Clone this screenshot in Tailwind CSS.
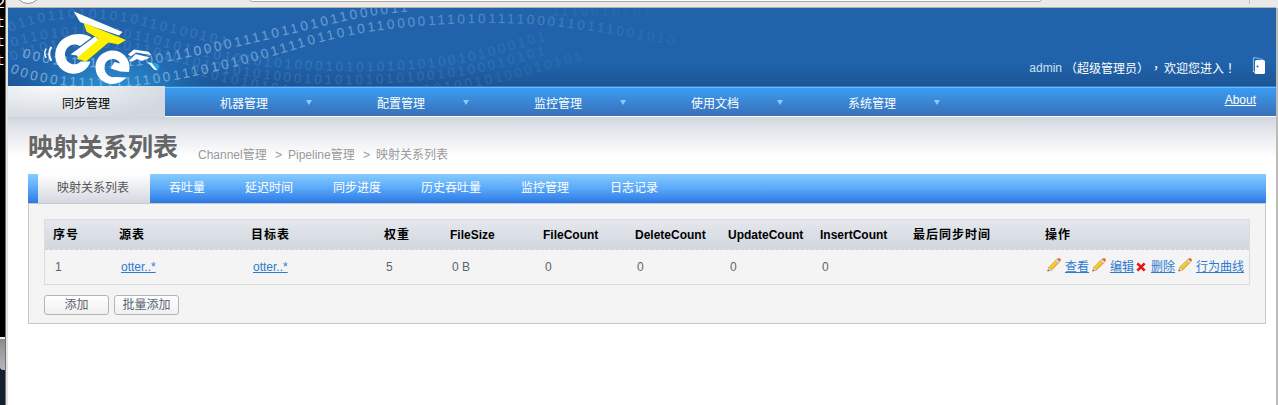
<!DOCTYPE html>
<html lang="zh">
<head>
<meta charset="utf-8">
<title>映射关系列表</title>
<script src="https://cdn.jsdelivr.net/npm/@tailwindcss/browser@4"></script>
</head>
<body class="w-[1278px] h-[405px] overflow-hidden bg-white flex font-['Liberation_Sans','Noto_Sans_CJK_SC',sans-serif] text-[12px] leading-[16px] text-[#5a6470]">
<svg width="0" height="0" class="absolute">
  <defs>
    <linearGradient id="pb" x1="0" y1="0" x2="1" y2="1"><stop offset="0" stop-color="#fff3a8"/><stop offset=".5" stop-color="#fbc81c"/><stop offset="1" stop-color="#d08a10"/></linearGradient>
    <symbol id="pencil" viewBox="0 0 14 14">
      <path d="M1.8 9.2 8.8 2.2 11.6 5 4.6 12 .8 13Z" fill="url(#pb)" stroke="#b08a4c" stroke-width=".6"/>
      <path d="M1.8 9.2 4.6 12 .8 13Z" fill="#f3dec2" stroke="#b89a78" stroke-width=".4"/>
      <path d="M.5 13.3 1.1 11.6 2.2 12.8Z" fill="#555"/>
      <path d="M8.4 2.6 10 1 12.8 3.8 11.2 5.4Z" fill="#dfe1e4" stroke="#9a9ca1" stroke-width=".5"/>
      <path d="M9.900 1.100 Q10 .2 13 .3 Q14 .8 13.700 3 Q13.300 3.800 12.700 3.800Z" fill="#f4661b"/>
    </symbol>
  </defs>
</svg>

<!-- strip of the desktop left of the window -->
<aside class="w-[8px] h-full shrink-0 flex">
  <div class="w-[5px] h-full flex flex-col bg-black overflow-hidden">
    <div class="h-[337px] text-white font-['Liberation_Mono',monospace] text-[15px] leading-[19px] -ml-[4px] -mt-[5px] mb-[5px]"><div>2</div><div>t</div><div>t</div><div>t</div></div>
    <div class="h-[2px] shrink-0 bg-[#f0f0f0]"></div>
    <div class="h-[31px] shrink-0 rounded-bl-[3px] bg-linear-to-b from-[#8c8c8c] to-[#b4b8be]"></div>
    <div class="flex-1 bg-[#142030]"></div>
  </div>
  <div class="w-px bg-[#74726f]"></div>
  <div class="w-[2px] bg-[#e6e4e1]"></div>
</aside>

<div class="w-[1268px] h-full shrink-0 flex flex-col">
  <!-- browser toolbar -->
  <div class="h-[8px] shrink-0 bg-[#ebeae8] border-b border-[#b5b3af] flex overflow-hidden">
    <div class="w-[26px] h-[26px] ml-[7px] -mt-[22px] rounded-full border border-[#969492] bg-[#fafafa]"></div>
    <div class="w-[793px] h-[10px] ml-[208px] -mt-[8px] rounded-b-[3px] border border-[#aaa8a5] bg-white"></div>
    <div class="w-px h-[4px] ml-[207px] bg-[#c4c2bf]"></div>
  </div>

  <!-- banner -->
  <header class="h-[78px] shrink-0 relative bg-linear-to-b from-[#2063ab] from-70% to-[#1c5596]">
    <svg class="absolute inset-0" width="1268" height="78" viewBox="8 8 1268 78">
      <defs>
        <radialGradient id="glow" gradientUnits="userSpaceOnUse" cx="0" cy="0" r="1" gradientTransform="translate(112 94) scale(110 56)"><stop offset="0" stop-color="#2f9ade"/><stop offset=".5" stop-color="#2889cf" stop-opacity=".6"/><stop offset="1" stop-color="#2066ae" stop-opacity="0"/></radialGradient>
        <linearGradient id="fa" gradientUnits="userSpaceOnUse" x1="8" y1="0" x2="700" y2="0"><stop offset="0" stop-color="#b4d6f4" stop-opacity=".6"/><stop offset=".5" stop-color="#9cc0e6" stop-opacity=".6"/><stop offset=".78" stop-color="#9cc0e6" stop-opacity=".3"/><stop offset=".9" stop-color="#9cc0e6" stop-opacity=".12"/><stop offset="1" stop-color="#9cc0e6" stop-opacity=".04"/></linearGradient>
        <linearGradient id="fb" gradientUnits="userSpaceOnUse" x1="8" y1="0" x2="660" y2="0"><stop offset="0" stop-color="#9cc4ea" stop-opacity=".2"/><stop offset=".65" stop-color="#9cc4ea" stop-opacity=".17"/><stop offset="1" stop-color="#9cc4ea" stop-opacity=".03"/></linearGradient>
        <path id="s1" d="M10 72 C40 87 100 91 150 84 C200 77 250 63 310 45 C370 28 430 23 500 23 C560 24 620 34 740 58"/>
        <path id="s2" d="M22 57 C60 70 120 70 170 61 C230 49 290 34 340 22 C370 15 400 12 450 7"/>
        <path id="s3" d="M10 32 C50 14 100 16 140 25 C180 36 210 40 250 54"/>
        <path id="s4" d="M12 47 C60 32 110 33 150 43 C200 58 230 62 262 66 C330 74 420 74 480 59 C530 45 560 36 620 22"/>
        <path id="s5" d="M12 61 C60 42 110 45 150 55 C210 72 240 76 282 81 C340 88 430 84 490 70 C540 57 570 46 640 32"/>
        <path id="s6" d="M190 73 C250 90 300 98 340 100 C400 100 480 88 520 77 C570 63 610 52 660 43"/>
        <path id="s7" d="M552 16 C590 15 630 15 680 22"/>
      </defs>
      <rect x="8" y="8" width="300" height="78" fill="url(#glow)"/>
      <g font-family="Liberation Sans, sans-serif" font-size="13.5" letter-spacing="2.8">
        <g fill="url(#fa)">
          <text><textPath href="#s1">00000111111111100111010100011110110101100001110101111000110111001010</textPath></text>
          <text><textPath href="#s2">0001111111111001110000111101101011000011</textPath></text>
        </g>
        <g fill="url(#fb)">
          <text><textPath href="#s3">0110110101010110100101</textPath></text>
          <text><textPath href="#s4">01101010101011010101010101010001010101010100101000101</textPath></text>
          <text><textPath href="#s5">01101010101011010101010101000101010101010010100010101</textPath></text>
          <text><textPath href="#s6">010101010101010100010101010010100010101</textPath></text>
          <text><textPath href="#s7">1110010101</textPath></text>
        </g>
      </g>
      <!-- bicycle logo -->
      <g fill="#fff">
        <path d="M73.8 11.5 L122.5 32 L119 35.5 L84 23.5 L80 22Z"/>
        <path d="M91.5 37.5 C83 31.5 66 33 58.500 44 C51 56 57 71 71 73.500 C80 75 88 69.500 90.500 61.500 L80.500 61.500 C76 67 66 64 65 56 C64 47 73 41.500 80 46 Z"/>
        <path d="M70.500 54.500 L95 36.500 L100 40.500 L84 54 L79 60 L77 55.500Z"/>
        <path d="M129.500 68.500 C130 58 122 50.500 112.500 50.500 C102.500 50.500 95.500 58.500 95.500 67 C95.500 77 103 84 112.500 84 C119 84 124 80 126.500 77.500 L115 77 C109 78 104.500 73 104.500 67.500 C104.500 62 109 58.500 113.500 59 C117 59.300 119 61 120 63.500 L114.500 62 L110.500 68.500 L120 71.500 L129 72Z"/>
        <path d="M128 54.500 L134 49.500 L148.500 51.800 L151.500 55 L147.500 54.500 L136 52.500 L131 56.500Z"/>
        <path d="M129 61 L135.500 54 L150 57.500 L142 61 L137 59 L132 61.500Z"/>
        <path d="M147.500 62 L154.500 64 L157.500 70.500 L154 69.500Z"/>
      </g>
      <path d="M152 63.500 C155.500 62 158.500 63.500 159.500 66.500 L157.500 70.500Z" fill="#22a7e8"/>
      <path d="M83.500 22.800 L126 40 L118.500 44.500 L108.500 42.500 L86 61.500 L76.500 58.500 L99 39 L86.500 31.500Z" fill="#fff200"/>
      <g fill="none" stroke="#fff" stroke-linecap="round"><path d="M51 47.500 Q47.500 53.500 51 60" stroke-width="2"/><path d="M46 49 Q43.500 53.500 46 57.500" stroke-width="1.400"/></g>
    </svg>
    <div class="relative h-full flex justify-end items-start pt-[52px]">
      <span class="text-[#cfe3f6] whitespace-nowrap">admin</span>
      <span class="flex text-white whitespace-nowrap ml-[3px] mr-[15px] font-['Noto_Sans_CJK_TC',sans-serif]"><span class="w-[12px]">（</span><span class="w-[60px] font-['Noto_Sans_CJK_SC',sans-serif]">超级管理员</span><span class="w-[12px]">）</span><span class="w-[15px] pl-[1px]" lang="zh-TW">，</span><span class="w-[60px] font-['Noto_Sans_CJK_SC',sans-serif]">欢迎您进入</span><span class="w-[12px]" lang="zh-TW">！</span></span>
      <svg class="-mt-[4px] ml-[1px] mr-[10px]" width="14" height="19" viewBox="0 0 14 19"><path d="M1.500 16V2.500Q1.500 1.500 2.500 1.500L11 3.500" fill="none" stroke="#78b4ee" stroke-width="1.200"/><rect x="3" y="4" width="10" height="14" rx="1.500" fill="#fff"/><circle cx="5.500" cy="10.500" r="1" fill="#2063ab"/><path d="M1.500 15 4 18" stroke="#fff"/></svg>
    </div>
  </header>

  <!-- main navigation -->
  <nav class="h-[31px] shrink-0 flex border-b border-white bg-linear-to-b from-[#3aa0f6] to-[#3870b8] text-white shadow-[inset_0_1px_0_#2a80cc,inset_0_2px_0_#6cbcfa]">
    <div class="w-[157px] h-[31px] pl-[54px] pt-[10px] text-black bg-radial-[at_25%_0%] from-[#f8f9fa] to-[#d2d8e0] to-80%">同步管理</div>
    <div class="w-[157px] pl-[55px] pt-[10px] flex"><span>机器管理</span><svg class="ml-[38px] mt-[4px]" width="6" height="5"><path d="M0 0H6L3 5Z" fill="#8ccaff"/></svg></div>
    <div class="w-[157px] pl-[55px] pt-[10px] flex"><span>配置管理</span><svg class="ml-[38px] mt-[4px]" width="6" height="5"><path d="M0 0H6L3 5Z" fill="#8ccaff"/></svg></div>
    <div class="w-[157px] pl-[55px] pt-[10px] flex"><span>监控管理</span><svg class="ml-[38px] mt-[4px]" width="6" height="5"><path d="M0 0H6L3 5Z" fill="#8ccaff"/></svg></div>
    <div class="w-[157px] pl-[55px] pt-[10px] flex"><span>使用文档</span><svg class="ml-[38px] mt-[4px]" width="6" height="5"><path d="M0 0H6L3 5Z" fill="#8ccaff"/></svg></div>
    <div class="w-[157px] pl-[55px] pt-[10px] flex"><span>系统管理</span><svg class="ml-[38px] mt-[4px]" width="6" height="5"><path d="M0 0H6L3 5Z" fill="#8ccaff"/></svg></div>
    <a class="ml-auto mr-[20px] pt-[6px] underline">About</a>
  </nav>

  <main class="flex-1 pl-[20px] pr-[10px] bg-white bg-[linear-gradient(#cfd4dc,#dfe3e8_9px,#eff0f3_24px,#ffffff_40px)]">
    <div class="h-[57px] flex items-start whitespace-nowrap">
      <h1 class="w-[170px] pt-[12px] text-[25px] leading-[36px] font-bold text-[#666]">映射关系列表</h1>
      <div class="pt-[30px] text-[#999] flex"><span class="w-[71px]">Channel管理</span><span class="w-[19px] text-center">&gt;</span><span class="w-[69px]">Pipeline管理</span><span class="w-[19px] text-center">&gt;</span><span>映射关系列表</span></div>
    </div>

    <div class="h-[29px] flex pl-[10px] bg-linear-to-b from-[#86ccff] via-[#5aa8f8] to-[#2b78e4] text-white leading-[28px] whitespace-nowrap">
      <span class="w-[112px] pl-[19px] text-[#555] bg-linear-to-b from-white to-[#d4d8df]">映射关系列表</span>
      <span class="pl-[19px] pr-[20px]">吞吐量</span>
      <span class="px-[20px]">延迟时间</span>
      <span class="px-[20px]">同步进度</span>
      <span class="px-[20px]">历史吞吐量</span>
      <span class="px-[20px]">监控管理</span>
      <span class="pl-[21px]">日志记录</span>
    </div>

    <section class="h-[121px] border border-[#c8c8c8] bg-[#f4f4f4] px-[15px] pt-[15px]">
      <div class="h-[66px] border border-[#dcdcdc] whitespace-nowrap">
        <div class="h-[30px] grid grid-cols-[66px_132px_133px_66px_93px_92px_93px_92px_93px_132px_1fr] pl-[8px] pt-px leading-[29px] font-bold text-black border-b border-dashed border-[#d0d0d0] bg-linear-to-b from-[#e4e8ec] to-[#d2d7e0]">
          <span class="tracking-[1px]">序号</span><span class="tracking-[1px]">源表</span><span class="tracking-[1px]">目标表</span><span class="tracking-[1px]">权重</span><span>FileSize</span><span>FileCount</span><span>DeleteCount</span><span>UpdateCount</span><span>InsertCount</span><span class="tracking-[1px]">最后同步时间</span><span class="tracking-[1px]">操作</span>
        </div>
        <div class="h-[34px] grid grid-cols-[66px_132px_133px_66px_93px_92px_93px_92px_93px_132px_1fr] pl-[10px] leading-[34px]">
          <span>1</span><span><a class="text-[#2e7ad1] underline">otter..*</a></span><span><a class="text-[#2e7ad1] underline">otter..*</a></span><span>5</span><span>0 B</span><span>0</span><span>0</span><span>0</span><span>0</span><span></span>
          <span class="flex text-[#2e7ad1]">
            <svg class="mt-[8px] mr-[4px]" width="14" height="14"><use href="#pencil"/></svg><a class="underline">查看</a>
            <svg class="mt-[8px] ml-[3px] mr-[4px]" width="14" height="14"><use href="#pencil"/></svg><a class="underline">编辑</a>
            <svg class="mt-[12px] ml-[2px] mr-[5px]" width="10" height="10" viewBox="0 0 9 9"><path d="M1.200 1.200 7.800 7.800M7.800 1.200 1.200 7.800" stroke="#ea1515" stroke-width="2.400"/></svg><a class="underline">删除</a>
            <svg class="mt-[8px] ml-[3px] mr-[4px]" width="14" height="14"><use href="#pencil"/></svg><a class="underline">行为曲线</a>
          </span>
        </div>
      </div>
      <div class="flex gap-[5px] pt-[10px]">
        <button class="w-[65px] h-[20px] rounded-[3px] border border-[#b4b4b4] bg-linear-to-b from-white to-[#f0f0f0] leading-[17px]">添加</button>
        <button class="w-[65px] h-[20px] rounded-[3px] border border-[#b4b4b4] bg-linear-to-b from-white to-[#f0f0f0] leading-[17px]">批量添加</button>
      </div>
    </section>
  </main>
</div>
<div class="w-[2px] h-full shrink-0 flex flex-col"><div class="h-[8px] bg-[#ebeae8]"></div><div class="flex-1 bg-[#bdbbb8]"></div></div>
</body>
</html>
